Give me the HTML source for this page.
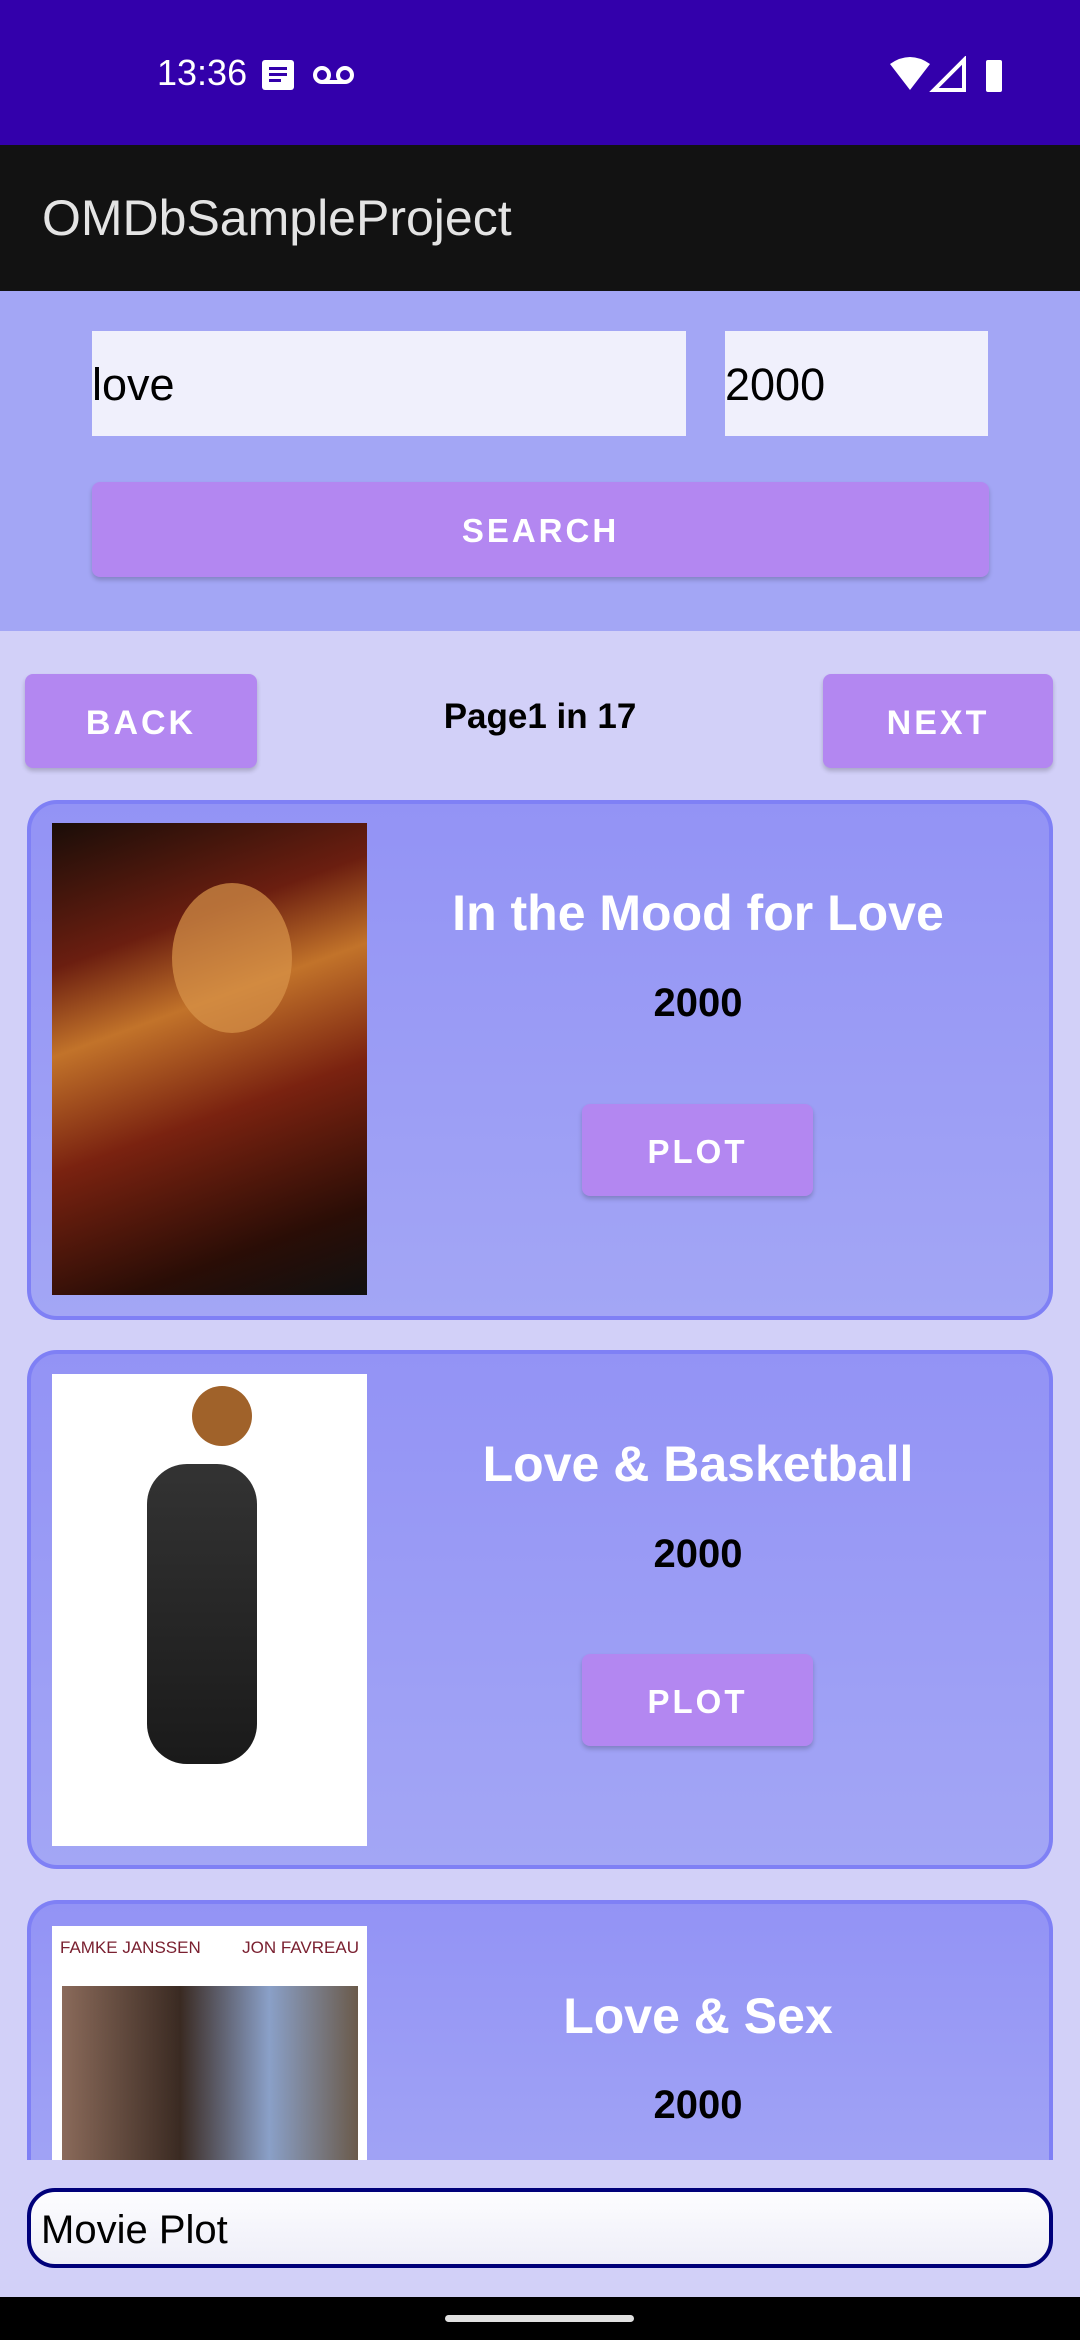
<!DOCTYPE html>
<html><head><meta charset="utf-8"><style>
*{margin:0;padding:0;box-sizing:border-box}
body{width:1080px;height:2340px;overflow:hidden;background:#d2d0f8;font-family:"Liberation Sans",sans-serif;position:relative}
.abs{position:absolute}
.status{left:0;top:0;width:1080px;height:145px;background:#3300ab;color:#fff}
.bar{left:0;top:145px;width:1080px;height:146px;background:#121212;color:#e4e4e4;font-size:50px;line-height:146px;padding-left:42px}
.search{left:0;top:291px;width:1080px;height:340px;background:#a3a6f5}
.inp{background:#f0f0fc;font-size:45px;color:#000;line-height:108px}
.btn{background:#b387f1;color:#fff;font-weight:bold;letter-spacing:3px;text-align:center;border-radius:8px;box-shadow:0 3px 5px rgba(0,0,0,.2)}
.card{left:27px;width:1026px;border:4px solid #7f80f5;border-radius:30px;background:linear-gradient(#9393f5,#a3a6f5)}
.title{color:#fff;font-weight:bold;font-size:50px;text-align:center;width:660px;left:368px}
.year{color:#000;font-weight:bold;font-size:40px;text-align:center;width:660px;left:368px}
</style></head><body>
<div class="abs status">
 <div class="abs" style="left:157px;top:52px;font-size:36px;">13:36</div>
 <svg class="abs" style="left:262px;top:58px" width="100" height="34" viewBox="0 0 100 34"><rect x="0" y="2" width="32" height="30" rx="3" fill="#fff"/><rect x="7" y="9" width="18" height="3" fill="#3300ab"/><rect x="7" y="15" width="18" height="3" fill="#3300ab"/><rect x="7" y="21" width="12" height="3" fill="#3300ab"/><circle cx="60" cy="17" r="7" fill="none" stroke="#fff" stroke-width="4"/><circle cx="83" cy="17" r="7" fill="none" stroke="#fff" stroke-width="4"/><rect x="60" y="22" width="23" height="4" fill="#fff"/></svg>
 <svg class="abs" style="left:890px;top:56px" width="120" height="40" viewBox="0 0 120 40"><path d="M0 8 Q20 -6 40 8 L20 34Z" fill="#fff"/><path d="M44 34 L74 4 L74 34Z" fill="none" stroke="#fff" stroke-width="4"/><rect x="96" y="4" width="16" height="32" rx="2" fill="#fff"/></svg>
</div>
<div class="abs bar">OMDbSampleProject</div>
<div class="abs search">
 <div class="abs inp" style="left:92px;top:40px;width:594px;height:105px">love</div>
 <div class="abs inp" style="left:725px;top:40px;width:263px;height:105px">2000</div>
 <div class="abs btn" style="left:92px;top:191px;width:897px;height:95px;line-height:98px;font-size:33px">SEARCH</div>
</div>
<div class="abs btn" style="left:25px;top:674px;width:232px;height:94px;line-height:98px;font-size:34px">BACK</div>
<div class="abs" style="left:300px;top:697px;width:480px;text-align:center;font-size:35px;font-weight:bold">Page1 in 17</div>
<div class="abs btn" style="left:823px;top:674px;width:230px;height:94px;line-height:98px;font-size:34px">NEXT</div>

<div class="abs card" style="top:800px;height:520px"></div>
<div class="abs" style="left:52px;top:823px;width:315px;height:472px;background:linear-gradient(160deg,#1a0d08 0%,#6b1e10 25%,#c2732a 40%,#7a2210 60%,#2a0d06 85%,#111 100%)"><div class="abs" style="left:120px;top:60px;width:120px;height:150px;border-radius:50%;background:#d9944a;opacity:.7"></div></div>
<div class="abs title" style="top:884px">In the Mood for Love</div>
<div class="abs year" style="top:981px">2000</div>
<div class="abs btn" style="left:582px;top:1104px;width:231px;height:92px;line-height:96px;font-size:33px">PLOT</div>

<div class="abs card" style="top:1350px;height:519px"></div>
<div class="abs" style="left:52px;top:1374px;width:315px;height:472px;background:#fff"><div class="abs" style="left:95px;top:90px;width:110px;height:300px;background:linear-gradient(#333,#1a1a1a);border-radius:40px"></div><div class="abs" style="left:140px;top:12px;width:60px;height:60px;border-radius:50%;background:#a0622a"></div></div>
<div class="abs title" style="top:1435px">Love &amp; Basketball</div>
<div class="abs year" style="top:1532px">2000</div>
<div class="abs btn" style="left:582px;top:1654px;width:231px;height:92px;line-height:96px;font-size:33px">PLOT</div>

<div class="abs card" style="top:1900px;height:320px;border-bottom:none;border-radius:30px 30px 0 0"></div>
<div class="abs" style="left:52px;top:1926px;width:315px;height:234px;background:#fff"><div style="font-size:17px;color:#7a2030;padding:12px 8px;display:flex;justify-content:space-between"><span>FAMKE JANSSEN</span><span>JON FAVREAU</span></div><div class="abs" style="left:10px;top:60px;width:296px;height:174px;background:linear-gradient(90deg,#8a6a5a,#3a2a22 40%,#8aa0c8 70%,#6a5a4a)"></div></div>
<div class="abs title" style="top:1987px">Love &amp; Sex</div>
<div class="abs year" style="top:2083px">2000</div>
<div class="abs" style="left:0;top:2160px;width:1080px;height:137px;background:#d2d0f8"></div>
<div class="abs" style="left:27px;top:2188px;width:1026px;height:80px;border:4px solid #00007a;border-radius:28px;background:linear-gradient(#fdfdff,#eeeef8);font-size:40px;line-height:76px;padding-left:10px">Movie Plot</div>
<div class="abs" style="left:0;top:2297px;width:1080px;height:43px;background:#000"></div>
<div class="abs" style="left:445px;top:2315px;width:189px;height:7px;border-radius:4px;background:#e0e0e0"></div>
</body></html>
